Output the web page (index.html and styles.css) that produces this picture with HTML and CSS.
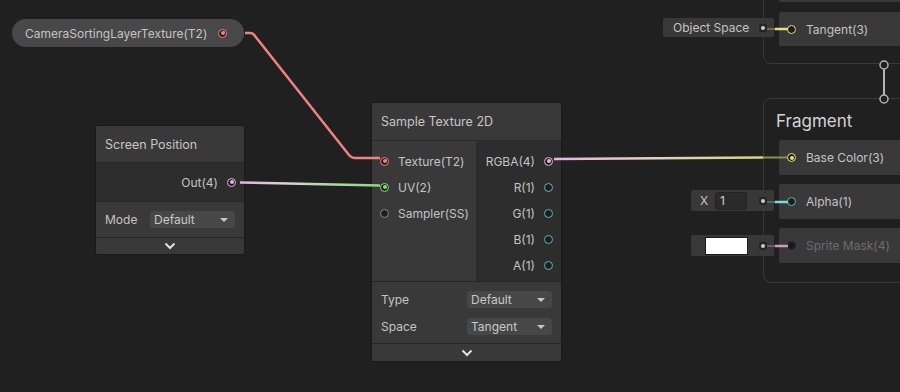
FILE: index.html
```html
<!DOCTYPE html>
<html>
<head>
<meta charset="utf-8">
<link rel="stylesheet" href="styles.css">
</head>
<body>
<div class="canvas">

  <div class="ctx ctx-vertex">
    <div class="block block-cut"></div>
    <div class="block"><span class="port hollow yellow"></span><span class="block-label">Tangent(3)</span></div>
  </div>

  <div class="ctx ctx-fragment">
    <div class="ctx-title">Fragment</div>
    <div class="block"><span class="port on yellow"></span><span class="block-label">Base Color(3)</span></div>
    <div class="block"><span class="port hollow cyan"></span><span class="block-label">Alpha(1)</span></div>
    <div class="block"><span class="port dead"></span><span class="block-label dim">Sprite Mask(4)</span></div>
  </div>

  <div class="inline inline-os">
    <span class="inline-text">Object Space</span>
    <span class="inline-dot yellow"></span>
  </div>
  <div class="inline inline-alpha">
    <span class="inline-x">X</span>
    <span class="inline-input">1</span>
    <span class="inline-dot cyan"></span>
  </div>
  <div class="inline inline-mask">
    <span class="swatch"></span>
    <span class="inline-dot pink"></span>
  </div>

  <div class="prop">
    <span class="prop-label">CameraSortingLayerTexture(T2)</span>
    <span class="port on red"></span>
  </div>

  <div class="node node-screen">
    <div class="node-head">Screen Position</div>
    <div class="node-outs">
      <div class="row out"><span>Out(4)</span><span class="port on pink"></span></div>
    </div>
    <div class="node-ctrls">
      <div class="ctrl"><span class="ctrl-label">Mode</span><span class="dropdown"><span>Default</span><span class="caret"></span></span></div>
    </div>
    <div class="node-foot"><svg width="12" height="8" viewBox="0 0 12 8"><path d="M1.5 1.5 L6 6 L10.5 1.5" fill="none" stroke="#e0e0e0" stroke-width="2"/></svg></div>
  </div>

  <div class="node node-sample">
    <div class="node-head">Sample Texture 2D</div>
    <div class="node-body">
      <div class="col-in">
        <div class="row in"><span class="port on red"></span><span>Texture(T2)</span></div>
        <div class="row in"><span class="port on green"></span><span>UV(2)</span></div>
        <div class="row in"><span class="port hollow gray"></span><span>Sampler(SS)</span></div>
      </div>
      <div class="col-out">
        <div class="row out"><span>RGBA(4)</span><span class="port on pink"></span></div>
        <div class="row out"><span>R(1)</span><span class="port hollow cyan"></span></div>
        <div class="row out"><span>G(1)</span><span class="port hollow cyan"></span></div>
        <div class="row out"><span>B(1)</span><span class="port hollow cyan"></span></div>
        <div class="row out"><span>A(1)</span><span class="port hollow cyan"></span></div>
      </div>
    </div>
    <div class="node-ctrls ctrls-2">
      <div class="ctrl"><span class="ctrl-label wide">Type</span><span class="dropdown"><span>Default</span><span class="caret"></span></span></div>
      <div class="ctrl"><span class="ctrl-label wide">Space</span><span class="dropdown"><span>Tangent</span><span class="caret"></span></span></div>
    </div>
    <div class="node-foot foot-2"><svg width="12" height="8" viewBox="0 0 12 8"><path d="M1.5 1.5 L6 6 L10.5 1.5" fill="none" stroke="#e0e0e0" stroke-width="2"/></svg></div>
  </div>

  <svg class="wires" width="900" height="392" viewBox="0 0 900 392">
    <defs>
      <linearGradient id="gUV" gradientUnits="userSpaceOnUse" x1="240" y1="0" x2="380" y2="0">
        <stop offset="0" stop-color="#e6b2de"/>
        <stop offset="0.35" stop-color="#d8d4d2"/>
        <stop offset="1" stop-color="#82dc76"/>
      </linearGradient>
      <linearGradient id="gRGBA" gradientUnits="userSpaceOnUse" x1="555" y1="0" x2="763" y2="0">
        <stop offset="0" stop-color="#e8b4e2"/>
        <stop offset="0.45" stop-color="#e2d2c4"/>
        <stop offset="1" stop-color="#d2d67a"/>
      </linearGradient>
    </defs>
    <path d="M245 33 L250 33 Q253 33 255 36 L349 155 Q351.5 158 355 158 L380 158" fill="none" stroke="#f08282" stroke-width="2.5"/>
    <path d="M240 182.5 L380 185.5" fill="none" stroke="url(#gUV)" stroke-width="2.5"/>
    <path d="M554 159 L763 157.5" fill="none" stroke="url(#gRGBA)" stroke-width="2.5"/>
    <path d="M763 157.5 L787 157.5" fill="none" stroke="#8e9050" stroke-width="2"/>
    <path d="M767 29 L775 29" stroke="#6a6a50" stroke-width="2"/>
    <path d="M775 29 L788 29" stroke="#e4e078" stroke-width="2.5"/>
    <path d="M767 202 L775 202" stroke="#4a6a6c" stroke-width="2"/>
    <path d="M775 202 L788 202" stroke="#7fd8e2" stroke-width="2.5"/>
    <path d="M767 246 L775 246" stroke="#6a5866" stroke-width="2"/>
    <path d="M775 246 L788 246" stroke="#c89cc0" stroke-width="2.5"/>
    <line x1="884" y1="69" x2="884" y2="95" stroke="#b4b4b4" stroke-width="2"/>
    <circle cx="884" cy="65" r="4" fill="#202020" stroke="#b4b4b4" stroke-width="1.5"/>
    <circle cx="884" cy="99" r="4" fill="#202020" stroke="#b4b4b4" stroke-width="1.5"/>
  </svg>
</div>
</body>
</html>
```

FILE: styles.css
```css
* { box-sizing: border-box; }
html, body { margin: 0; padding: 0; }
body {
  background: #202020;
  font-family: Inter, "Noto Sans", sans-serif;
  font-size: 12px;
  color: #c4c4c4;
}
.canvas {
  position: relative;
  width: 900px;
  height: 392px;
  overflow: hidden;
  background: #202020;
}

/* ports */
.port {
  --c: #999;
  width: 9px;
  height: 9px;
  border-radius: 50%;
  border: 1.5px solid var(--c);
  background: #1e1e1e;
  display: inline-flex;
  align-items: center;
  justify-content: center;
  flex: none;
}
.port.on::after {
  content: "";
  width: 4px;
  height: 4px;
  border-radius: 50%;
  background: var(--c);
}
.red { --c: #f08282; }
.pink { --c: #e8b0e2; }
.green { --c: #86de7a; }
.yellow { --c: #e2e07a; }
.cyan { --c: #7ad6dc; }
.gray { --c: #9a9a9a; }
.port.hollow.cyan { --c: #5fb4ba; }
.port.hollow.gray { --c: #8a8a8a; }
.port.dead { border-color: #2a2a2a; background: #1a1a1a; }

/* contexts */
.ctx {
  position: absolute;
  left: 763px;
  width: 170px;
  border: 1px solid #383838;
  border-radius: 8px;
  display: flex;
  flex-direction: column;
}
.ctx-vertex {
  top: -40px;
  height: 104px;
  padding-top: 7px;
  gap: 10px;
}
.ctx-fragment {
  top: 98px;
  height: 185px;
  gap: 9px;
}
.ctx-title {
  font-size: 17px;
  line-height: 22px;
  color: #d4d4d4;
  padding: 11px 0 0 12px;
  margin-bottom: -1px;
}
.block {
  margin-left: 15px;
  height: 35px;
  background: #393939;
  border-radius: 2px 0 0 2px;
  display: flex;
  align-items: center;
  padding-left: 8px;
  gap: 10px;
  flex: none;
}
.ctx-vertex .block { height: 34px; }
.block-label { color: #c4c4c4; font-size: 12px; }
.block-label.dim { color: #6c6c6c; }

/* inline fields */
.inline {
  position: absolute;
  background: #383838;
  border-radius: 2px;
  display: flex;
  align-items: center;
}
.inline-os { left: 663px; top: 18px; width: 111px; height: 19px; padding-left: 10px; }
.inline-alpha { left: 691px; top: 190px; width: 83px; height: 21px; padding-left: 9px; }
.inline-mask { left: 691px; top: 235px; width: 83px; height: 21px; padding-left: 14px; }
.inline-text { color: #c4c4c4; }
.inline-x { width: 15px; color: #c4c4c4; }
.inline-input {
  width: 32px;
  height: 18px;
  background: #2a2a2a;
  border: 1px solid #232323;
  border-radius: 3px;
  padding-left: 4px;
  line-height: 16px;
  color: #d0d0d0;
}
.swatch {
  width: 43px;
  height: 18px;
  background: #ffffff;
  border: 1px solid #1c1c1c;
}
.inline-dot {
  --c: #ccc;
  margin-left: auto;
  margin-right: 7px;
  width: 8px;
  height: 8px;
  border-radius: 2px;
  background: #262626;
  display: flex;
  align-items: center;
  justify-content: center;
}
.inline-dot::after {
  content: "";
  width: 4px;
  height: 4px;
  border-radius: 50%;
  background: var(--c);
}

/* property pill */
.prop {
  position: absolute;
  left: 12px;
  top: 19px;
  width: 232px;
  height: 28px;
  border-radius: 14px;
  background: #484848;
  display: flex;
  align-items: center;
  padding-left: 13px;
}
.prop-label { color: #c4c4c4; width: 193px; }

/* nodes */
.node {
  position: absolute;
  background: #393939;
  border: 1px solid #1a1a1a;
  border-radius: 3px;
  display: flex;
  flex-direction: column;
  overflow: hidden;
}
.node-head {
  height: 38px;
  flex: none;
  display: flex;
  align-items: center;
  padding-left: 9px;
  font-size: 12.5px;
  color: #c6c6c6;
  background: #393939;
  border-bottom: 1px solid #2a2a2a;
}
.row {
  height: 26px;
  display: flex;
  align-items: center;
}
.row.out { justify-content: flex-end; gap: 9px; }
.row.in { gap: 9px; }

.node-screen { left: 95px; top: 125px; width: 150px; }
.node-screen .node-head { height: 37px; }
.node-outs {
  height: 38px;
  flex: none;
  background: #2d2d2d;
  display: flex;
  flex-direction: column;
  justify-content: center;
  padding-right: 8px;
}
.node-ctrls {
  background: #393939;
  border-top: 1px solid #262626;
  display: flex;
  flex-direction: column;
  justify-content: center;
  padding: 0 9px;
  height: 36px;
  flex: none;
}
.ctrl { height: 27px; display: flex; align-items: center; }
.ctrl-label { width: 45px; color: #c4c4c4; }
.ctrl-label.wide { width: 86px; }
.dropdown {
  width: 85px;
  height: 17px;
  background: #474747;
  border-radius: 3px;
  display: flex;
  align-items: center;
  justify-content: space-between;
  padding: 0 7px 0 4px;
  color: #c8c8c8;
}
.caret {
  width: 0;
  height: 0;
  border-left: 4px solid transparent;
  border-right: 4px solid transparent;
  border-top: 4px solid #c8c8c8;
}
.node-foot {
  height: 17px;
  flex: none;
  border-top: 1px solid #262626;
  background: #393939;
  display: flex;
  align-items: center;
  justify-content: center;
}

.node-sample { left: 371px; top: 102px; width: 191px; }
.node-sample .node-head { height: 38px; }
.node-body { display: flex; height: 140px; flex: none; }
.col-in {
  width: 105px;
  background: #393939;
  border-right: 1px solid #2a2a2a;
  padding: 7px 0 0 8px;
}
.col-out {
  flex: 1;
  background: #2d2d2d;
  padding: 7px 8px 0 0;
}
.ctrls-2 { height: 62px; justify-content: flex-start; padding-top: 4px; }
.foot-2 { height: 18px; }

.wires {
  position: absolute;
  left: 0;
  top: 0;
  pointer-events: none;
}
```
